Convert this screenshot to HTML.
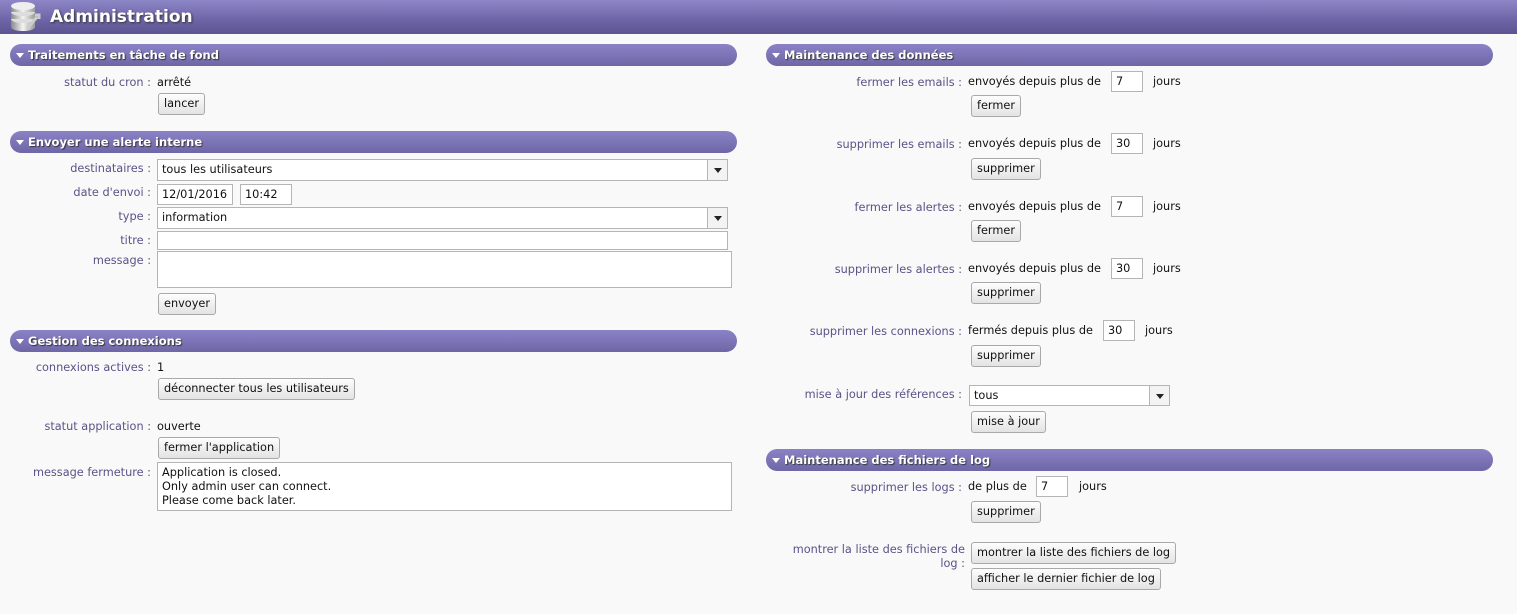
<!DOCTYPE html>
<html><head><meta charset="utf-8"><style>
*{box-sizing:border-box;margin:0;padding:0}
body{width:1517px;height:614px;background:#f9f9f9;font-family:"DejaVu Sans",Verdana,sans-serif;font-size:11.3px;color:#111;position:relative;overflow:hidden}
.hd{position:absolute;left:0;top:0;width:1517px;height:34px;background:linear-gradient(#8d86c6,#6c64a6 60%,#5c5590);}
.hd h1{position:absolute;left:50px;top:7px;font-size:17px;font-weight:bold;color:#fff;text-shadow:1px 1px 2px #333;font-family:"DejaVu Sans",Verdana,sans-serif}
.bar{position:absolute;height:22px;border-radius:11px;background:linear-gradient(#8a82c6,#6e67a6);color:#fff;font-weight:bold;font-size:11.5px;line-height:22px;padding-left:18px;text-shadow:1px 1px 1px #333}
.bar:before{content:"";position:absolute;left:6px;top:9px;border-left:4px solid transparent;border-right:4px solid transparent;border-top:5px solid #fff}
.l{position:absolute;text-align:right;color:#5a5288;white-space:nowrap;margin-top:1px}
.v{position:absolute;white-space:nowrap;margin-top:1px}
.b{position:absolute;height:22px;border:1px solid #a9a9a9;border-radius:3px;background:linear-gradient(#fdfdfd,#e3e3e3);line-height:20px;padding:0 5px;white-space:nowrap}
.i{position:absolute;background:#fff;border:1px solid #b5b5b5;padding-left:4px;line-height:19px;white-space:nowrap}
.dd{position:absolute;top:0;right:0;width:20px;height:100%;border-left:1px solid #b5b5b5;background:#f3f3f3}
.dd:after{content:"";position:absolute;left:6px;top:8px;border-left:4px solid transparent;border-right:4px solid transparent;border-top:5px solid #222}
</style></head><body>
<div class="hd">
<svg style="position:absolute;left:9px;top:1px" width="32" height="32" viewBox="0 0 32 32">
<defs><linearGradient id="g" x1="0" x2="1"><stop offset="0" stop-color="#888"/><stop offset=".5" stop-color="#f4f4f4"/><stop offset="1" stop-color="#999"/></linearGradient></defs>
<ellipse cx="14" cy="26" rx="12" ry="4" fill="url(#g)"/><rect x="2" y="18" width="24" height="8" fill="url(#g)"/><ellipse cx="14" cy="18" rx="12" ry="4" fill="#ddd"/>
<rect x="2" y="11" width="24" height="7" fill="url(#g)"/><ellipse cx="14" cy="11" rx="12" ry="4" fill="#ddd"/>
<rect x="2" y="5" width="24" height="6" fill="url(#g)"/><ellipse cx="14" cy="5" rx="12" ry="4" fill="#eee"/>
<path d="M18 28 L28 16 M26 14 l4 0 l0 4" stroke="#ccc" stroke-width="3" fill="none"/></svg>
<h1>Administration</h1></div>

<div class="bar" style="left:10px;top:44px;width:727px">Traitements en tâche de fond</div>
<div class="l" style="right:1366px;top:75px">statut du cron :</div><div class="v" style="left:157px;top:75px">arrêté</div>
<div class="b" style="left:158px;top:93px">lancer</div>

<div class="bar" style="left:10px;top:131px;width:727px">Envoyer une alerte interne</div>
<div class="l" style="right:1366px;top:161px">destinataires :</div>
<div class="i" style="left:157px;top:159px;width:571px;height:22px">tous les utilisateurs<span class="dd"></span></div>
<div class="l" style="right:1366px;top:185px">date d'envoi :</div>
<div class="i" style="left:157px;top:184px;width:76px;height:21px">12/01/2016</div>
<div class="i" style="left:240px;top:184px;width:52px;height:21px">10:42</div>
<div class="l" style="right:1366px;top:209px">type :</div>
<div class="i" style="left:157px;top:207px;width:571px;height:22px">information<span class="dd"></span></div>
<div class="l" style="right:1366px;top:233px">titre :</div>
<div class="i" style="left:157px;top:231px;width:571px;height:19px"></div>
<div class="l" style="right:1366px;top:253px">message :</div>
<div class="i" style="left:157px;top:251px;width:575px;height:37px"></div>
<div class="b" style="left:158px;top:293px">envoyer</div>

<div class="bar" style="left:10px;top:330px;width:727px">Gestion des connexions</div>
<div class="l" style="right:1366px;top:360px">connexions actives :</div><div class="v" style="left:157px;top:360px">1</div>
<div class="b" style="left:158px;top:378px">déconnecter tous les utilisateurs</div>
<div class="l" style="right:1366px;top:419px">statut application :</div><div class="v" style="left:157px;top:419px">ouverte</div>
<div class="b" style="left:158px;top:437px">fermer l'application</div>
<div class="l" style="right:1366px;top:465px">message fermeture :</div>
<div class="i" style="left:157px;top:462px;width:575px;height:49px;line-height:14px;padding-top:3px">Application is closed.<br>Only admin user can connect.<br>Please come back later.</div>

<div class="bar" style="left:766px;top:44px;width:727px">Maintenance des données</div>
<div class="l" style="right:555px;top:75px">fermer les emails :</div><div class="v" style="left:968px;top:74px">envoyés depuis plus de</div>
<div class="i" style="left:1111px;top:71px;width:32px;height:21px">7</div><div class="v" style="left:1153px;top:74px">jours</div>
<div class="b" style="left:971px;top:95px">fermer</div>

<div class="l" style="right:555px;top:137px">supprimer les emails :</div><div class="v" style="left:968px;top:136px">envoyés depuis plus de</div>
<div class="i" style="left:1111px;top:133px;width:32px;height:21px">30</div><div class="v" style="left:1153px;top:136px">jours</div>
<div class="b" style="left:971px;top:158px">supprimer</div>

<div class="l" style="right:555px;top:200px">fermer les alertes :</div><div class="v" style="left:968px;top:199px">envoyés depuis plus de</div>
<div class="i" style="left:1111px;top:196px;width:32px;height:21px">7</div><div class="v" style="left:1153px;top:199px">jours</div>
<div class="b" style="left:971px;top:220px">fermer</div>

<div class="l" style="right:555px;top:262px">supprimer les alertes :</div><div class="v" style="left:968px;top:261px">envoyés depuis plus de</div>
<div class="i" style="left:1111px;top:258px;width:32px;height:21px">30</div><div class="v" style="left:1153px;top:261px">jours</div>
<div class="b" style="left:971px;top:282px">supprimer</div>

<div class="l" style="right:555px;top:324px">supprimer les connexions :</div><div class="v" style="left:968px;top:323px">fermés depuis plus de</div>
<div class="i" style="left:1103px;top:320px;width:32px;height:21px">30</div><div class="v" style="left:1145px;top:323px">jours</div>
<div class="b" style="left:971px;top:345px">supprimer</div>

<div class="l" style="right:555px;top:387px">mise à jour des références :</div>
<div class="i" style="left:969px;top:385px;width:201px;height:21px">tous<span class="dd"></span></div>
<div class="b" style="left:971px;top:411px">mise à jour</div>

<div class="bar" style="left:766px;top:449px;width:727px">Maintenance des fichiers de log</div>
<div class="l" style="right:555px;top:480px">supprimer les logs :</div><div class="v" style="left:968px;top:479px">de plus de</div>
<div class="i" style="left:1036px;top:476px;width:32px;height:21px">7</div><div class="v" style="left:1079px;top:479px">jours</div>
<div class="b" style="left:971px;top:501px">supprimer</div>

<div class="l" style="right:552px;top:542px;line-height:14px">montrer la liste des fichiers de<br>log :</div>
<div class="b" style="left:971px;top:542px">montrer la liste des fichiers de log</div>
<div class="b" style="left:971px;top:568px">afficher le dernier fichier de log</div>
</body></html>
